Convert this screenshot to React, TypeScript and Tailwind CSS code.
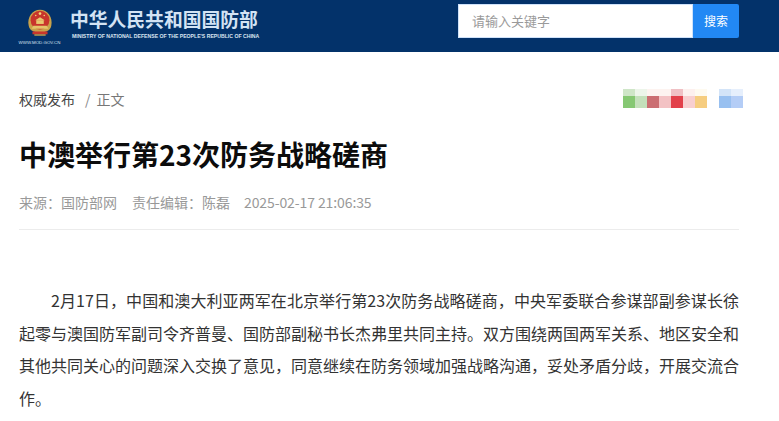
const CJK = "font-['Noto_Sans_CJK_SC','Noto_Sans',sans-serif]";

const mosaicTop = ["#cfe6c8", "#edf5ea", "#fdf3f0", "#fdf3f0", "#f0c0c4", "#fdf0ee", "#fefaf0", "#ffffff", "#d3e4f8", "#e6effc"];
const mosaicBottom = ["#86c873", "#c4e0bb", "#cb6e72", "#f3c2c4", "#e2404a", "#f8cfd0", "#f6cd80", "#ffffff", "#98c0f0", "#b4cdf6"];

function Emblem() {
  return (
    <svg width="32" height="34" viewBox="0 0 34 34">
      <path d="M5 20 C3 11 9 3 17 3 C25 3 31 11 29 20 C28 25 24 27 17 27 C10 27 6 25 5 20 Z" fill="#c9a24a" />
      <circle cx="17" cy="14" r="10" fill="#c8352c" />
      <path d="M10 20 L24 20 L26 23 L8 23 Z" fill="#e4c46a" />
      <path d="M13 18 L13 14 L21 14 L21 18 Z" fill="#e8c96f" />
      <path d="M12 14 L22 14 L17 11 Z" fill="#e8c96f" />
      <circle cx="17" cy="7" r="1.4" fill="#f2d97a" />
      <circle cx="12.5" cy="9" r="0.8" fill="#f2d97a" />
      <circle cx="21.5" cy="9" r="0.8" fill="#f2d97a" />
      <rect x="9" y="26" width="16" height="3" fill="#c8352c" />
      <rect x="11" y="29" width="12" height="1.5" fill="#c9a24a" />
    </svg>
  );
}

export default function App() {
  return (
    <div className={`${CJK} w-[779px] h-[421px] overflow-hidden bg-white`}>
      {/* Header */}
      <header className="h-[52px] bg-[#03326a] flex items-center justify-between pl-[18px] pr-10">
        <div className="flex items-start gap-[9px]">
          <div className="w-[43px] flex flex-col items-center -mt-[1px]">
            <Emblem />
            <span className="text-[4.4px] leading-[6px] text-[#dbe5f1] font-['Liberation_Sans',sans-serif] whitespace-nowrap">WWW.MOD.GOV.CN</span>
          </div>
          <div className="flex flex-col">
            <span className="text-[18.8px] leading-[24px] font-bold text-[#d3e3f4] whitespace-nowrap">中华人民共和国国防部</span>
            <span className="ml-[2px] mt-[1px] text-[5.15px] leading-[8px] font-bold text-[#dbe5f1] font-['Liberation_Sans',sans-serif] whitespace-nowrap">MINISTRY OF NATIONAL DEFENSE OF THE PEOPLE'S REPUBLIC OF CHINA</span>
          </div>
        </div>
        <div className="flex h-[34px] -mt-[10px]">
          <div className="w-[235px] bg-white pl-[13px] flex items-center text-[13px] text-[#9a9a9a] border border-[#cfe2fa]">请输入关键字</div>
          <button className="w-[46px] bg-[#2288f4] text-white text-[12px] rounded-r-[2px]">搜索</button>
        </div>
      </header>

      <main className="px-[19px] pr-10">
        {/* Breadcrumb row */}
        <div className="flex items-center justify-between h-[28px] mt-[33px] text-[14px] text-[#555]">
          <div className="flex items-center">
            <span className="text-[#444]">权威发布</span>
            <span className="ml-[10px] mr-[6px] text-[#888]">/</span>
            <span className="text-[#777]">正文</span>
          </div>
          <div className="flex flex-col -mr-[4px] mt-[-2px]">
            <div className="flex">
              {mosaicTop.map((c, i) => (
                <div key={i} className="w-3 h-[7px]" style={{ backgroundColor: c }} />
              ))}
            </div>
            <div className="flex">
              {mosaicBottom.map((c, i) => (
                <div key={i} className="w-3 h-3" style={{ backgroundColor: c }} />
              ))}
            </div>
          </div>
        </div>

        <h1 className="mt-[20px] text-[28px] leading-[42px] font-bold text-[#0c0c0c] whitespace-nowrap">中澳举行第23次防务战略磋商</h1>

        <div className="mt-[17px] flex text-[14px] leading-[20px] text-[#999] whitespace-nowrap border-b border-[#ececec] pb-[17px]">
          <span>来源：国防部网</span>
          <span className="ml-[15px]">责任编辑：陈磊</span>
          <span className="ml-[14px] tracking-[-0.1px]">2025-02-17 21:06:35</span>
        </div>

        <p className="mt-[54px] text-[16px] leading-[32.5px] text-[#333] indent-8 text-justify">
          2月17日，中国和澳大利亚两军在北京举行第23次防务战略磋商，中央军委联合参谋部副参谋长徐起零与澳国防军副司令齐普曼、国防部副秘书长杰弗里共同主持。双方围绕两国两军关系、地区安全和其他共同关心的问题深入交换了意见，同意继续在防务领域加强战略沟通，妥处矛盾分歧，开展交流合作。
        </p>
      </main>
    </div>
  );
}
